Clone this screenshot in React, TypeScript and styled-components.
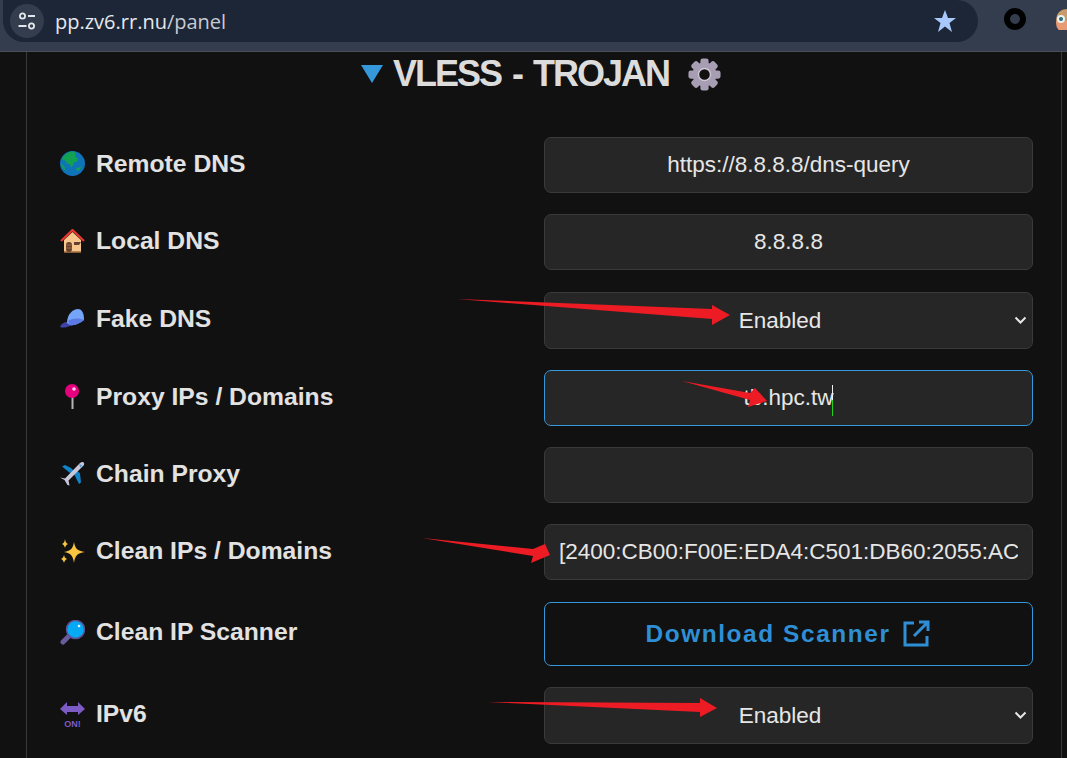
import { ReactNode } from "react";
import styled, { createGlobalStyle } from "styled-components";

const GlobalStyle = createGlobalStyle`
  html, body {
    margin: 0;
    padding: 0;
    background: #111111;
    overflow: hidden;
  }
  body {
    font-family: "Liberation Sans", Arial, sans-serif;
  }
`;

const Page = styled.div`
  position: relative;
  width: 1067px;
  height: 758px;
  overflow: hidden;
  background: #111111;
`;

const BrowserBar = styled.header`
  display: flex;
  align-items: flex-start;
  height: 51px;
  padding-left: 3px;
  background: #333d4e;
  border-bottom: 1px solid #4a4f58;
`;

const AddressPill = styled.div`
  display: flex;
  flex-shrink: 0;
  align-items: center;
  width: 975px;
  height: 42px;
  padding: 0 21px 0 7px;
  box-sizing: border-box;
  background: #1d2637;
  border-radius: 0 21px 21px 21px;
`;

const SiteButton = styled.div`
  display: flex;
  align-items: center;
  justify-content: center;
  width: 34px;
  height: 34px;
  border-radius: 50%;
  background: #333d4e;
`;

const Url = styled.span`
  flex: 1;
  margin-left: 11px;
  font-family: "Open Sans", sans-serif;
  font-size: 20px;
  color: #c7cbd2;
`;

const UrlHost = styled.span`
  color: #e6e9ee;
`;

const Extensions = styled.div`
  display: flex;
  flex-shrink: 0;
  align-items: center;
  gap: 30px;
  height: 38px;
  margin-left: 26px;
`;

const Panel = styled.main`
  width: 1036px;
  height: 706px;
  margin-left: 26px;
  padding: 0 28px 0 33px;
  box-sizing: border-box;
  border-left: 1px solid #3a3a3a;
  border-right: 1px solid #3a3a3a;
`;

const Heading = styled.h2`
  display: flex;
  align-items: center;
  justify-content: center;
  gap: 10px;
  height: 44px;
  margin: 0 10px 41px 0;
  font-family: "Liberation Sans", sans-serif;
  font-size: 36px;
  font-weight: 700;
  letter-spacing: -2px;
  word-spacing: 3px;
  color: #dcdcdc;
`;

const GearSlot = styled.span`
  display: flex;
  margin-left: 8px;
`;

const Rows = styled.div`
  display: flex;
  flex-direction: column;
  gap: 21.25px;
`;

const Row = styled.div`
  display: flex;
  align-items: center;
  justify-content: space-between;
`;

const Label = styled.label`
  display: flex;
  align-items: center;
  gap: 11px;
  padding-bottom: 2.4px;
  font-size: 24.7px;
  font-weight: 700;
  color: #e2e2e2;
`;

const EmojiBox = styled.span`
  display: flex;
  width: 25px;
  height: 25px;
`;

const fieldBase = `
  width: 489px;
  height: 56px;
  box-sizing: border-box;
  border-radius: 7px;
  background: #262626;
  color: #e6e6e6;
  font-family: "Liberation Sans", Arial, sans-serif;
  font-size: 22.5px;
  outline: none;
`;

const TextInput = styled.input<{ $focused?: boolean }>`
  ${fieldBase}
  padding: 0 14px;
  text-align: center;
  border: 1px solid ${(p) => (p.$focused ? "#3498db" : "#3a3a3a")};
`;

const SelectWrap = styled.div`
  position: relative;
  width: 489px;
`;

const Select = styled.select`
  ${fieldBase}
  display: block;
  height: 57px;
  padding: 0 31px 0 14px;
  border: 1px solid #3a3a3a;
  appearance: none;
  text-align: center;
`;

const Chevron = styled.svg`
  position: absolute;
  top: 24px;
  right: 6px;
  width: 13px;
  height: 9px;
  pointer-events: none;
`;

const LinkButton = styled.a`
  display: flex;
  align-items: center;
  justify-content: center;
  gap: 11px;
  width: 489px;
  height: 64px;
  padding-right: 2px;
  box-sizing: border-box;
  border: 1px solid #3498db;
  border-radius: 7px;
  color: #2f8fd6;
  font-size: 24.4px;
  font-weight: 700;
  letter-spacing: 1.6px;
  text-decoration: none;
`;

const Caret = styled.span`
  position: absolute;
  left: 832px;
  top: 385px;
  width: 1px;
  height: 31px;
  background: linear-gradient(#f0f0f0 0 50%, #22d11f 50% 100%);
`;

const Annotations = styled.svg`
  position: absolute;
  left: 0;
  top: 0;
  width: 1067px;
  height: 758px;
  pointer-events: none;
`;

const SliderIcon = () => (
  <svg width="20" height="20" viewBox="0 0 20 20" fill="none" stroke="#e3e6ea" strokeWidth="1.8">
    <circle cx="5.5" cy="5" r="2.6" />
    <path d="M11 5h7M1.5 15h8" />
    <circle cx="14.5" cy="15" r="2.6" />
  </svg>
);

const Globe = () => (
  <svg viewBox="0 0 25 25" width="25" height="25">
    <circle cx="12.5" cy="12.5" r="12.5" fill="#0f73b8" />
    <path d="M3 6c3-4 7-6 11-5.500l2 2-1 3 3 2-1 3-3 1-1 3-2 2-1-3-3-1-2-3-3-1z" fill="#12a150" />
    <path d="M16 17l5-1-1 3-3 1zM1 12l3 3 2 5c-3-2-5-5-5-8z" fill="#12a150" />
  </svg>
);

const House = () => (
  <svg viewBox="0 0 25 25" width="25" height="25">
    <path d="M4 11L12.500 3 21 11v12H4z" fill="#f6c68c" />
    <path d="M1 12L12.500 1 24 12" fill="none" stroke="#e8362d" strokeWidth="2.200" />
    <path d="M4 23h17" stroke="#a2703f" strokeWidth="1.600" />
    <rect x="6" y="13" width="6" height="10" rx="3" fill="#66402f" />
    <path d="M6 16h6M6 19h6" stroke="#a06a45" strokeWidth="1" />
    <path d="M14 13h7l-2 3h-5z" fill="#66402f" />
  </svg>
);

const Cap = () => (
  <svg viewBox="0 0 25 25" width="25" height="25">
    <path d="M0 21c1-3 4-5 8-5l4 3c-4 2-8 3.500-12 2z" fill="#3d43a8" />
    <path d="M7 17C7 8 13 3 18 3c4 0 6 4 6 11-4 3-9 6-14 5z" fill="#74a5f8" />
    <path d="M8 15c5-3 10-3 16-1-4 3-9 6-14 5z" fill="#5b78e4" />
  </svg>
);

const Pin = () => (
  <svg viewBox="0 0 25 25" width="25" height="25">
    <rect x="11.500" y="12" width="2" height="13" fill="#b5b5b5" />
    <circle cx="12" cy="7" r="7" fill="#e6007e" />
    <circle cx="14" cy="5" r="1.800" fill="#ffd5ea" />
  </svg>
);

const Plane = () => (
  <svg viewBox="0 0 25 25" width="25" height="25">
    <path d="M10 7L4 4 1 5.500 9 12l4-2z" fill="#1083c9" transform="translate(1 0)" />
    <path d="M14 13l5 10 2-1.500-1-9-3-3z" fill="#1083c9" />
    <path d="M0 16.500l5 1L20 2c2-1.500 5-1.500 4 2L8.500 19.500l1 5-2-.5-3-5-4.500-2.500z" fill="#c9c7d8" />
    <path d="M19 3.500l3 .5-1.500 2.500z" fill="#3d9bdc" />
  </svg>
);

const Sparkles = () => (
  <svg viewBox="0 0 25 25" width="25" height="25" fill="#f9c440">
    <path d="M14 3c1 6 3 9 11 10-8 1-10 4-11 11-1-7-3-10-10-11 7-1 9-4 10-10z" />
    <path d="M5 0c.5 3 1 4 3 5-2 1-2.500 2-3 4-.5-2-1-3-3-4 2-1 2.500-2 3-5z" />
    <path d="M4 16c.5 2 1 3 3 4-2 1-2.500 2-3 4-.5-2-1-3-3-4 2-1 2.500-2 3-4z" />
  </svg>
);

const Lens = () => (
  <svg viewBox="0 0 25 25" width="25" height="25">
    <path d="M9 16L3 22" stroke="#6b5a9c" strokeWidth="5" strokeLinecap="round" />
    <circle cx="15.500" cy="9.500" r="9" fill="#05a9f4" stroke="#5c5296" strokeWidth="1.500" />
    <circle cx="19" cy="6" r="1.300" fill="#e8f8ff" />
  </svg>
);

const OnArrow = () => (
  <svg viewBox="0 0 25 25" width="25" height="25" fill="#7c5cc4">
    <path d="M0 7L7 0v4h11V0l7 7-7 6V10H7v3z" />
    <text x="12.500" y="24.500" fontSize="9" fontWeight="700" textAnchor="middle" fontFamily="Liberation Sans">ON!</text>
  </svg>
);

const Gear = () => (
  <svg viewBox="0 0 36 36" width="35" height="33">
    <g fill="#a79eb3">
      {[0, 45, 90, 135].map((deg) => (
        <rect key={deg} x="13.500" y="0.500" width="9" height="35" rx="2.500" transform={`rotate(${deg} 18 18)`} />
      ))}
    </g>
    <circle cx="18" cy="18" r="13" fill="#a79eb3" />
    <circle cx="18" cy="18" r="6.500" fill="#111111" stroke="#cfc9d6" strokeWidth="1.500" />
  </svg>
);

type FieldRow = { icon: ReactNode; label: string; field: ReactNode };

const EnabledSelect = () => (
  <SelectWrap>
    <Select defaultValue="enabled">
      <option value="enabled">Enabled</option>
      <option value="disabled">Disabled</option>
    </Select>
    <Chevron viewBox="0 0 13 9">
      <path d="M1.500 1.500L6.500 6.500 11.500 1.500" fill="none" stroke="#e6e6e6" strokeWidth="2" />
    </Chevron>
  </SelectWrap>
);

const rows: FieldRow[] = [
  { icon: <Globe />, label: "Remote DNS", field: <TextInput readOnly value="https://8.8.8.8/dns-query" /> },
  { icon: <House />, label: "Local DNS", field: <TextInput readOnly value="8.8.8.8" /> },
  { icon: <Cap />, label: "Fake DNS", field: <EnabledSelect /> },
  { icon: <Pin />, label: "Proxy IPs / Domains", field: <TextInput $focused readOnly value="tb.hpc.tw" /> },
  { icon: <Plane />, label: "Chain Proxy", field: <TextInput readOnly value="" /> },
  {
    icon: <Sparkles />,
    label: "Clean IPs / Domains",
    field: <TextInput readOnly value="[2400:CB00:F00E:EDA4:C501:DB60:2055:AC10:1:2:3" />,
  },
  {
    icon: <Lens />,
    label: "Clean IP Scanner",
    field: (
      <LinkButton href="#scanner">
        Download Scanner
        <svg width="28" height="28" viewBox="0 0 28 28" fill="none" stroke="#2f8fd6" strokeWidth="3">
          <path d="M12 3H3v22h22v-9" />
          <path d="M17 2h9v9M26 2L12 16" />
        </svg>
      </LinkButton>
    ),
  },
  { icon: <OnArrow />, label: "IPv6", field: <EnabledSelect /> },
];

export default function App() {
  return (
    <Page>
      <GlobalStyle />
      <BrowserBar>
        <AddressPill>
          <SiteButton>
            <SliderIcon />
          </SiteButton>
          <Url>
            <UrlHost>pp.zv6.rr.nu</UrlHost>/panel
          </Url>
          <svg width="24" height="24" viewBox="0 0 24 24" fill="#a8c7fa">
            <path d="M12 1l3 8h8l-6.500 5 2.500 9-7-5.500L5 23l2.500-9L1 9h8z" />
          </svg>
        </AddressPill>
        <Extensions>
          <svg width="22" height="22" viewBox="0 0 22 22">
            <circle cx="11" cy="11" r="8" fill="none" stroke="#000" strokeWidth="6" />
          </svg>
          <svg width="21" height="21" viewBox="0 0 21 21">
            <circle cx="10.500" cy="10.500" r="10.500" fill="#c99a6b" />
            <path d="M0 12h21v2a10.500 10.500 0 0 1-21 0z" fill="#e89a72" />
            <circle cx="5" cy="10" r="4" fill="#e8f4f4" />
            <circle cx="5" cy="10" r="2" fill="#2e6b7a" />
          </svg>
        </Extensions>
      </BrowserBar>
      <Panel>
        <Heading>
          <svg width="22" height="18" viewBox="0 0 22 18">
            <path d="M0 0h22L11 18z" fill="#3498db" />
          </svg>
          VLESS - TROJAN
          <GearSlot>
            <Gear />
          </GearSlot>
        </Heading>
        <Rows>
          {rows.map((row) => (
            <Row key={row.label}>
              <Label>
                <EmojiBox>{row.icon}</EmojiBox>
                {row.label}
              </Label>
              {row.field}
            </Row>
          ))}
        </Rows>
      </Panel>
      <Caret />
      <Annotations viewBox="0 0 1067 758">
        <g fill="#ed1c24">
          <polygon points="457,299 712,309 712,305 730,315 712,325 712,319" />
          <polygon points="682,381 750,393 755,388 767,401 748,407 750,400" />
          <polygon points="422,538 533,549 545,544 550,555 531,563 533,556" />
          <polygon points="488,702 700,703 700,698 717,708 700,717 700,712" />
        </g>
      </Annotations>
    </Page>
  );
}
